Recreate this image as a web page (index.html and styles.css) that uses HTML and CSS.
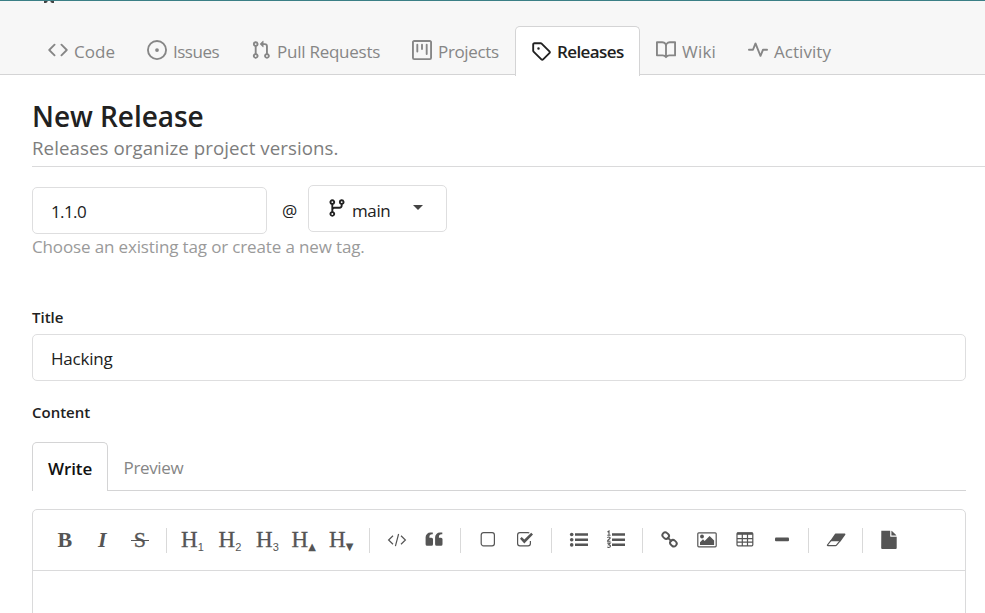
FILE: index.html
```html
<!DOCTYPE html>
<html lang="en">
<head>
<meta charset="utf-8">
<title>New Release</title>
<link rel="stylesheet" href="styles.css">
</head>
<body>
<header class="repo-header">
  <svg class="repo-glyph" viewBox="0 0 10 2"><path d="M0 2V0h3.500v1L2 2zM10 2V0H6.500v1L8 2z"/></svg>
  <nav class="tabs">
    <a class="tab"><svg class="oct" viewBox="0 0 16 16"><path d="m11.28 3.22 4.25 4.25a.75.75 0 0 1 0 1.06l-4.25 4.25a.75.75 0 0 1-1.06-1.06L13.94 8l-3.72-3.72a.75.75 0 0 1 1.06-1.06Zm-6.56 0a.75.75 0 0 1 1.06 1.06L2.06 8l3.72 3.72a.75.75 0 0 1-1.06 1.06L.47 8.53a.75.75 0 0 1 0-1.06Z"/></svg><span class="w-code">Code</span></a>
    <a class="tab"><svg class="oct" viewBox="0 0 16 16"><path d="M8 9.5a1.5 1.5 0 1 0 0-3 1.5 1.5 0 0 0 0 3Z"/><path d="M8 0a8 8 0 1 1 0 16A8 8 0 0 1 8 0ZM1.5 8a6.5 6.5 0 1 0 13 0 6.5 6.5 0 0 0-13 0Z"/></svg><span class="w-issues">Issues</span></a>
    <a class="tab"><svg class="oct" viewBox="0 0 16 16"><path d="M1.5 3.25a2.25 2.25 0 1 1 3 2.122v5.256a2.251 2.251 0 1 1-1.5 0V5.372A2.25 2.25 0 0 1 1.5 3.25Zm5.677-.177L9.573.677A.25.25 0 0 1 10 .854V2.5h1A2.5 2.5 0 0 1 13.5 5v5.628a2.251 2.251 0 1 1-1.5 0V5a1 1 0 0 0-1-1h-1v1.646a.25.25 0 0 1-.427.177L7.177 3.427a.25.25 0 0 1 0-.354ZM3.75 2.5a.75.75 0 1 0 0 1.5.75.75 0 0 0 0-1.5Zm0 9.5a.75.75 0 1 0 0 1.5.75.75 0 0 0 0-1.5Zm8.25.75a.75.75 0 1 0 1.5 0 .75.75 0 0 0-1.5 0Z"/></svg><span class="w-pulls">Pull Requests</span></a>
    <a class="tab"><svg class="oct" viewBox="0 0 16 16"><path d="M1.75 0h12.5C15.216 0 16 .784 16 1.75v12.5A1.75 1.75 0 0 1 14.25 16H1.75A1.75 1.75 0 0 1 0 14.25V1.75C0 .784.784 0 1.75 0ZM1.5 1.75v12.5c0 .138.112.25.25.25h12.5a.25.25 0 0 0 .25-.25V1.75a.25.25 0 0 0-.25-.25H1.75a.25.25 0 0 0-.25.25ZM11.75 3a.75.75 0 0 1 .75.75v7.5a.75.75 0 0 1-1.5 0v-7.5a.75.75 0 0 1 .75-.75Zm-8.25.75a.75.75 0 0 1 1.5 0v5.5a.75.75 0 0 1-1.5 0ZM8 3a.75.75 0 0 1 .75.75v3.5a.75.75 0 0 1-1.5 0v-3.5A.75.75 0 0 1 8 3Z"/></svg><span class="w-projects">Projects</span></a>
    <a class="tab active"><svg class="oct" viewBox="0 0 16 16"><path d="M1 7.775V2.75C1 1.784 1.784 1 2.75 1h5.025c.464 0 .91.184 1.238.513l6.25 6.25a1.75 1.75 0 0 1 0 2.474l-5.026 5.026a1.75 1.75 0 0 1-2.474 0l-6.25-6.25A1.752 1.752 0 0 1 1 7.775Zm1.5 0c0 .066.026.13.073.177l6.25 6.25a.25.25 0 0 0 .354 0l5.025-5.025a.25.25 0 0 0 0-.354l-6.25-6.25a.25.25 0 0 0-.177-.073H2.75a.25.25 0 0 0-.25.25ZM6 5a1 1 0 1 1 0 2 1 1 0 0 1 0-2Z"/></svg><span class="w-releases">Releases</span></a>
    <a class="tab"><svg class="oct" viewBox="0 0 16 16"><path d="M0 1.75A.75.75 0 0 1 .75 1h4.253c1.227 0 2.317.59 3 1.501A3.743 3.743 0 0 1 11.006 1h4.245a.75.75 0 0 1 .75.75v10.5a.75.75 0 0 1-.75.75h-4.507a2.25 2.25 0 0 0-1.591.659l-.622.621a.75.75 0 0 1-1.06 0l-.622-.621A2.25 2.25 0 0 0 5.258 13H.75a.75.75 0 0 1-.75-.75Zm7.251 10.324.004-5.073-.002-2.253A2.25 2.25 0 0 0 5.003 2.5H1.5v9h3.757a3.75 3.75 0 0 1 1.994.574ZM8.755 4.75l-.004 7.322a3.752 3.752 0 0 1 1.992-.572H14.5v-9h-3.495a2.25 2.25 0 0 0-2.25 2.25Z"/></svg><span class="w-wiki">Wiki</span></a>
    <a class="tab"><svg class="oct" viewBox="0 0 16 16"><path d="M6 2c.306 0 .582.187.696.471L10 10.731l1.304-3.26A.751.751 0 0 1 12 7h3.25a.75.75 0 0 1 0 1.5h-2.742l-1.812 4.528a.751.751 0 0 1-1.392 0L6 4.77 4.696 8.03A.75.75 0 0 1 4 8.5H.75a.75.75 0 0 1 0-1.5h2.742l1.812-4.529A.751.751 0 0 1 6 2Z"/></svg><span class="w-activity">Activity</span></a>
  </nav>
</header>
<main>
  <div class="heading">
    <h1><span>New Release</span></h1>
    <p>Releases organize project versions.</p>
  </div>
  <div class="tag-row">
    <div class="input tag-input"><span>1.1.0</span></div>
    <span class="at">@</span>
    <div class="branch">
      <svg class="oct" viewBox="0 0 16 16"><path d="M9.5 3.25a2.25 2.25 0 1 1 3 2.122V6A2.5 2.5 0 0 1 10 8.5H6a1 1 0 0 0-1 1v1.128a2.251 2.251 0 1 1-1.5 0V5.372a2.25 2.25 0 1 1 1.5 0v1.836A2.493 2.493 0 0 1 6 7h4a1 1 0 0 0 1-1v-.628A2.25 2.25 0 0 1 9.5 3.25Zm-6 0a.75.75 0 1 0 1.5 0 .75.75 0 0 0-1.5 0Zm8.25-.75a.75.75 0 1 0 0 1.5.75.75 0 0 0 0-1.5ZM4.25 12a.75.75 0 1 0 0 1.5.75.75 0 0 0 0-1.5Z"/></svg>
      <span>main</span><i class="caret"></i>
    </div>
  </div>
  <p class="hint">Choose an existing tag or create a new tag.</p>
  <label class="title-label">Title</label>
  <div class="input title-input"><span>Hacking</span></div>
  <label class="content-label">Content</label>
  <div class="editor-tabs"><a class="write">Write</a><a class="preview">Preview</a></div>
  <section class="editor">
    <div class="toolbar">
      <b class="btn bold">B</b><b class="btn italic">I</b><b class="btn strike">S</b>
      <i class="sep"></i>
      <b class="btn head">H<sub>1</sub></b><b class="btn head">H<sub>2</sub></b><b class="btn head">H<sub>3</sub></b><b class="btn head step">H<sub class="tri">▲</sub></b><b class="btn head step">H<sub class="tri">▼</sub></b>
      <i class="sep"></i>
      <b class="btn"><svg viewBox="0 0 20 20"><path class="line" d="M6 5.700 1.600 10 6 14.300M14 5.700l4.400 4.300-4.400 4.300M11.600 4 8.400 16.200"/></svg></b>
      <b class="btn"><svg viewBox="0 0 20 20"><path d="M8.800 2.500v1.800H8a2.600 2.600 0 0 0-2.600 2.600v.8h2.100a1.500 1.500 0 0 1 1.500 1.500v5a1.500 1.500 0 0 1-1.500 1.500h-4.400a1.500 1.500 0 0 1-1.500-1.500V7.300A4.800 4.800 0 0 1 6.400 2.500zM18.300 2.500v1.800h-.8a2.600 2.600 0 0 0-2.600 2.600v.8H17a1.500 1.500 0 0 1 1.500 1.500v5a1.500 1.500 0 0 1-1.500 1.500h-4.400a1.500 1.500 0 0 1-1.500-1.500V7.300a4.800 4.800 0 0 1 4.800-4.800z"/></svg></b>
      <i class="sep"></i>
      <b class="btn"><svg viewBox="0 0 20 20"><rect class="line" x="3.200" y="2.600" width="13.200" height="13.200" rx="2.300"/></svg></b>
      <b class="btn"><svg viewBox="0 0 20 20"><path class="line" d="M15.400 11v2.500a2.300 2.300 0 0 1-2.300 2.300H4.900a2.300 2.300 0 0 1-2.300-2.300V4.900a2.300 2.300 0 0 1 2.300-2.300h8.200q.7 0 1.200.3"/><path d="m5 8.700 1.700-1.700 2.600 2.600 6.900-6.900 1.800 1.800-8.700 8.900z"/></svg></b>
      <i class="sep"></i>
      <b class="btn"><svg viewBox="0 0 20 20"><circle cx="2.700" cy="4.500" r="1.800"/><circle cx="2.700" cy="9.700" r="1.800"/><circle cx="2.700" cy="14.900" r="1.800"/><path d="M6 3.300h13v2.500H6zM6 8.500h13V11H6zM6 13.600h13v2.500H6z"/></svg></b>
      <b class="btn"><svg viewBox="0 0 20 20"><path d="M6 3.300h13v2.500H6zM6 8.500h13V11H6zM6 13.600h13v2.500H6z"/><path class="digits" d="M1.500 2 3 1v4M1.300 5.200h3.300M1.300 7.700q1.400-1.300 2.700-.2c1 1.300-2.500 2-2.500 3.800h3M1.300 13.100h2.900l-1.600 1.700c2.700 0 2.200 2.800-.1 2.700l-1.200-.5"/></svg></b>
      <i class="sep"></i>
      <b class="btn"><svg viewBox="0 0 20 20"><g class="chain"><rect x="-3.400" y="-2.800" width="6.800" height="5.600" rx="2.700" transform="translate(5.700 5.600) rotate(43)"/><rect x="-3.400" y="-2.800" width="6.800" height="5.600" rx="2.700" transform="translate(13.400 13.200) rotate(43)"/><path d="m7.300 7.200 4.400 4.400"/></g></svg></b>
      <b class="btn"><svg viewBox="0 0 20 20"><rect class="line" x=".8" y="2.800" width="18.400" height="14" rx="1"/><circle cx="5" cy="6.500" r="1.900"/><path d="M3 15v-2.700l3-3 1.600 1.600 5-5 4.500 4.600V15z"/></svg></b>
      <b class="btn"><svg viewBox="0 0 20 20"><rect class="line" x="2" y="2.800" width="15.800" height="13" rx="1"/><path d="M2 2.500h15.800v2.300H2z"/><path class="line" d="M2 8.600h16M2 12.200h16M7.300 4v12M12.500 4v12"/></svg></b>
      <b class="btn"><svg viewBox="0 0 20 20"><rect x="3" y="7.400" width="14" height="3.900" rx="1"/></svg></b>
      <i class="sep"></i>
      <b class="btn"><svg viewBox="0 0 20 20"><path d="M9.500 3.400h9.300q1 .1.500 1.300l-4.600 6.500H3.900l5-7.300q.2-.4.600-.5z"/><path class="line" d="M4.900 10.600 1.500 15q-.3.700.4.700h7.600q.6 0 1-.5l3.800-4.500"/></svg></b>
      <i class="sep"></i>
      <b class="btn"><svg viewBox="0 0 20 20"><path d="M2.300.7h8.900v5.200q0 .9.900.9h5.600V18a1 1 0 0 1-1 1H3.200a1 1 0 0 1-1-1zM12.400.8q.5.200.8.500l3.700 3.400q.4.400.5.900h-5z"/></svg></b>
    </div>
  </section>
</main>
</body>
</html>
```
FILE: styles.css
```css
* { box-sizing: border-box; }
body {
  margin: 0;
  height: 613px;
  overflow: hidden;
  background: #fff;
  color: #212121;
  font: 17px/24px "Open Sans", "Noto Sans", sans-serif;
}
h1, p { margin: 0; }
svg { display: block; fill: currentColor; }
.repo-header {
  height: 75px;
  border-top: 1px solid #3b7f86;
  border-bottom: 1px solid #d4d4d5;
  background: #f7f7f7;
  padding-left: 32px;
}
.repo-glyph { width: 10px; height: 2px; margin-left: 12px; fill: #444; }
.tabs { display: flex; height: 48px; margin-top: 23px; }
.tab {
  display: flex;
  gap: 6px;
  height: 49px;
  padding: 14px 16px 0;
  color: #868686;
  white-space: nowrap;
}
.oct { width: 20px; height: 20px; flex: none; }
.tab.active {
  height: 50px;
  padding: 14px 15px 0;
  border: 1px solid #d4d4d5;
  border-bottom: 0;
  border-radius: 5px 5px 0 0;
  background: #fff;
  color: #212121;
  font-weight: 600;
}
.w-code { width: 41px; letter-spacing: .05px; }
.w-issues { width: 46px; letter-spacing: -.5px; }
.w-pulls { width: 103px; letter-spacing: -.25px; }
.w-projects { width: 61px; letter-spacing: -.35px; }
.w-releases { width: 67px; margin-top: -1px; letter-spacing: -.6px; }
.w-wiki { width: 34px; letter-spacing: .2px; }
.w-activity { width: 57px; letter-spacing: .05px; }
main { padding-left: 32px; }
.heading { height: 92px; padding-top: 22px; border-bottom: 1px solid #dadadb; }
h1 { font-size: 28px; line-height: 38px; font-weight: 600; letter-spacing: -.05px; }
.heading p { font-size: 18.7px; line-height: 26px; color: #7d7d7d; letter-spacing: .07px; }
.tag-row { display: flex; height: 67px; padding-top: 18px; }
.input, .branch { display: flex; align-items: center; height: 47px; border: 1px solid #dededf; border-radius: 5px; }
.input { padding: 2px 18px 0; letter-spacing: -.2px; }
.tag-input { width: 235px; margin-top: 2px; letter-spacing: -.6px; }
.at { width: 41px; margin-top: 14px; text-align: center; padding-left: 4px; }
.branch { width: 139px; padding: 0 18px; }
.branch .oct { margin-top: -2px; }
.branch span { width: 41px; margin: 5px 0 0 5px; letter-spacing: -.4px; }
.caret { margin: -2px 0 0 20px; border: 5px solid transparent; border-top-color: #444; border-bottom: 0; }
.hint { height: 68px; line-height: 25px; color: #9a9a9a; letter-spacing: -.14px; }
label { display: block; font-size: 15px; font-weight: 600; }
.title-label { height: 32px; padding-top: 3px; }
.title-input { width: 934px; }
.content-label { padding-top: 19px; height: 61px; }
.editor-tabs { display: flex; width: 934px; height: 49px; border-bottom: 1px solid #d4d4d5; }
.write { width: 76px; height: 49px; padding: 14px 0 0 15px; background: #fff; border: 1px solid #d4d4d5; border-bottom: 0; border-radius: 5px 5px 0 0; color: #111; font-weight: 600; letter-spacing: -.1px; }
.preview { padding: 14px 0 0 15.5px; color: #868686; letter-spacing: -.35px; }
.editor { width: 934px; height: 125px; margin-top: 18px; border: 1px solid #dadadb; border-radius: 5px; }
.toolbar { display: flex; align-items: center; height: 61px; padding-left: 12.5px; border-bottom: 1px solid #dadadb; color: #555; }
.btn { display: flex; align-items: center; justify-content: center; width: 37.5px; height: 38px; padding-left: 1px; flex: none; font: 22px/24px "Liberation Serif", serif; }
.btn svg { width: 20px; height: 20px; }
.bold { font-weight: bold; }
.italic { font-style: italic; font-weight: bold; }
.strike { background: linear-gradient(#555, #555) 10px 19px / 18px 1px no-repeat; -webkit-text-stroke: .3px #555; }
.head { justify-content: flex-start; padding-left: 7px; font-size: 23px; -webkit-text-stroke: .3px #555; }
.step { padding-left: 5px; }
.btn sub { align-self: flex-end; font: 11px/12px "Liberation Sans", sans-serif; margin-bottom: 6px; -webkit-text-stroke: 0; }
.btn .tri { font: 10px/12px "DejaVu Sans", sans-serif; margin-bottom: 6px; }
.sep { width: 1px; height: 25px; margin: 0 7.5px; background: #d9d9d9; flex: none; }
.line { fill: none; stroke: currentColor; stroke-width: 1.2; }
.digits { fill: none; stroke: currentColor; stroke-width: 1.1; }
.chain { fill: none; stroke: currentColor; stroke-width: 1.9; }
```
